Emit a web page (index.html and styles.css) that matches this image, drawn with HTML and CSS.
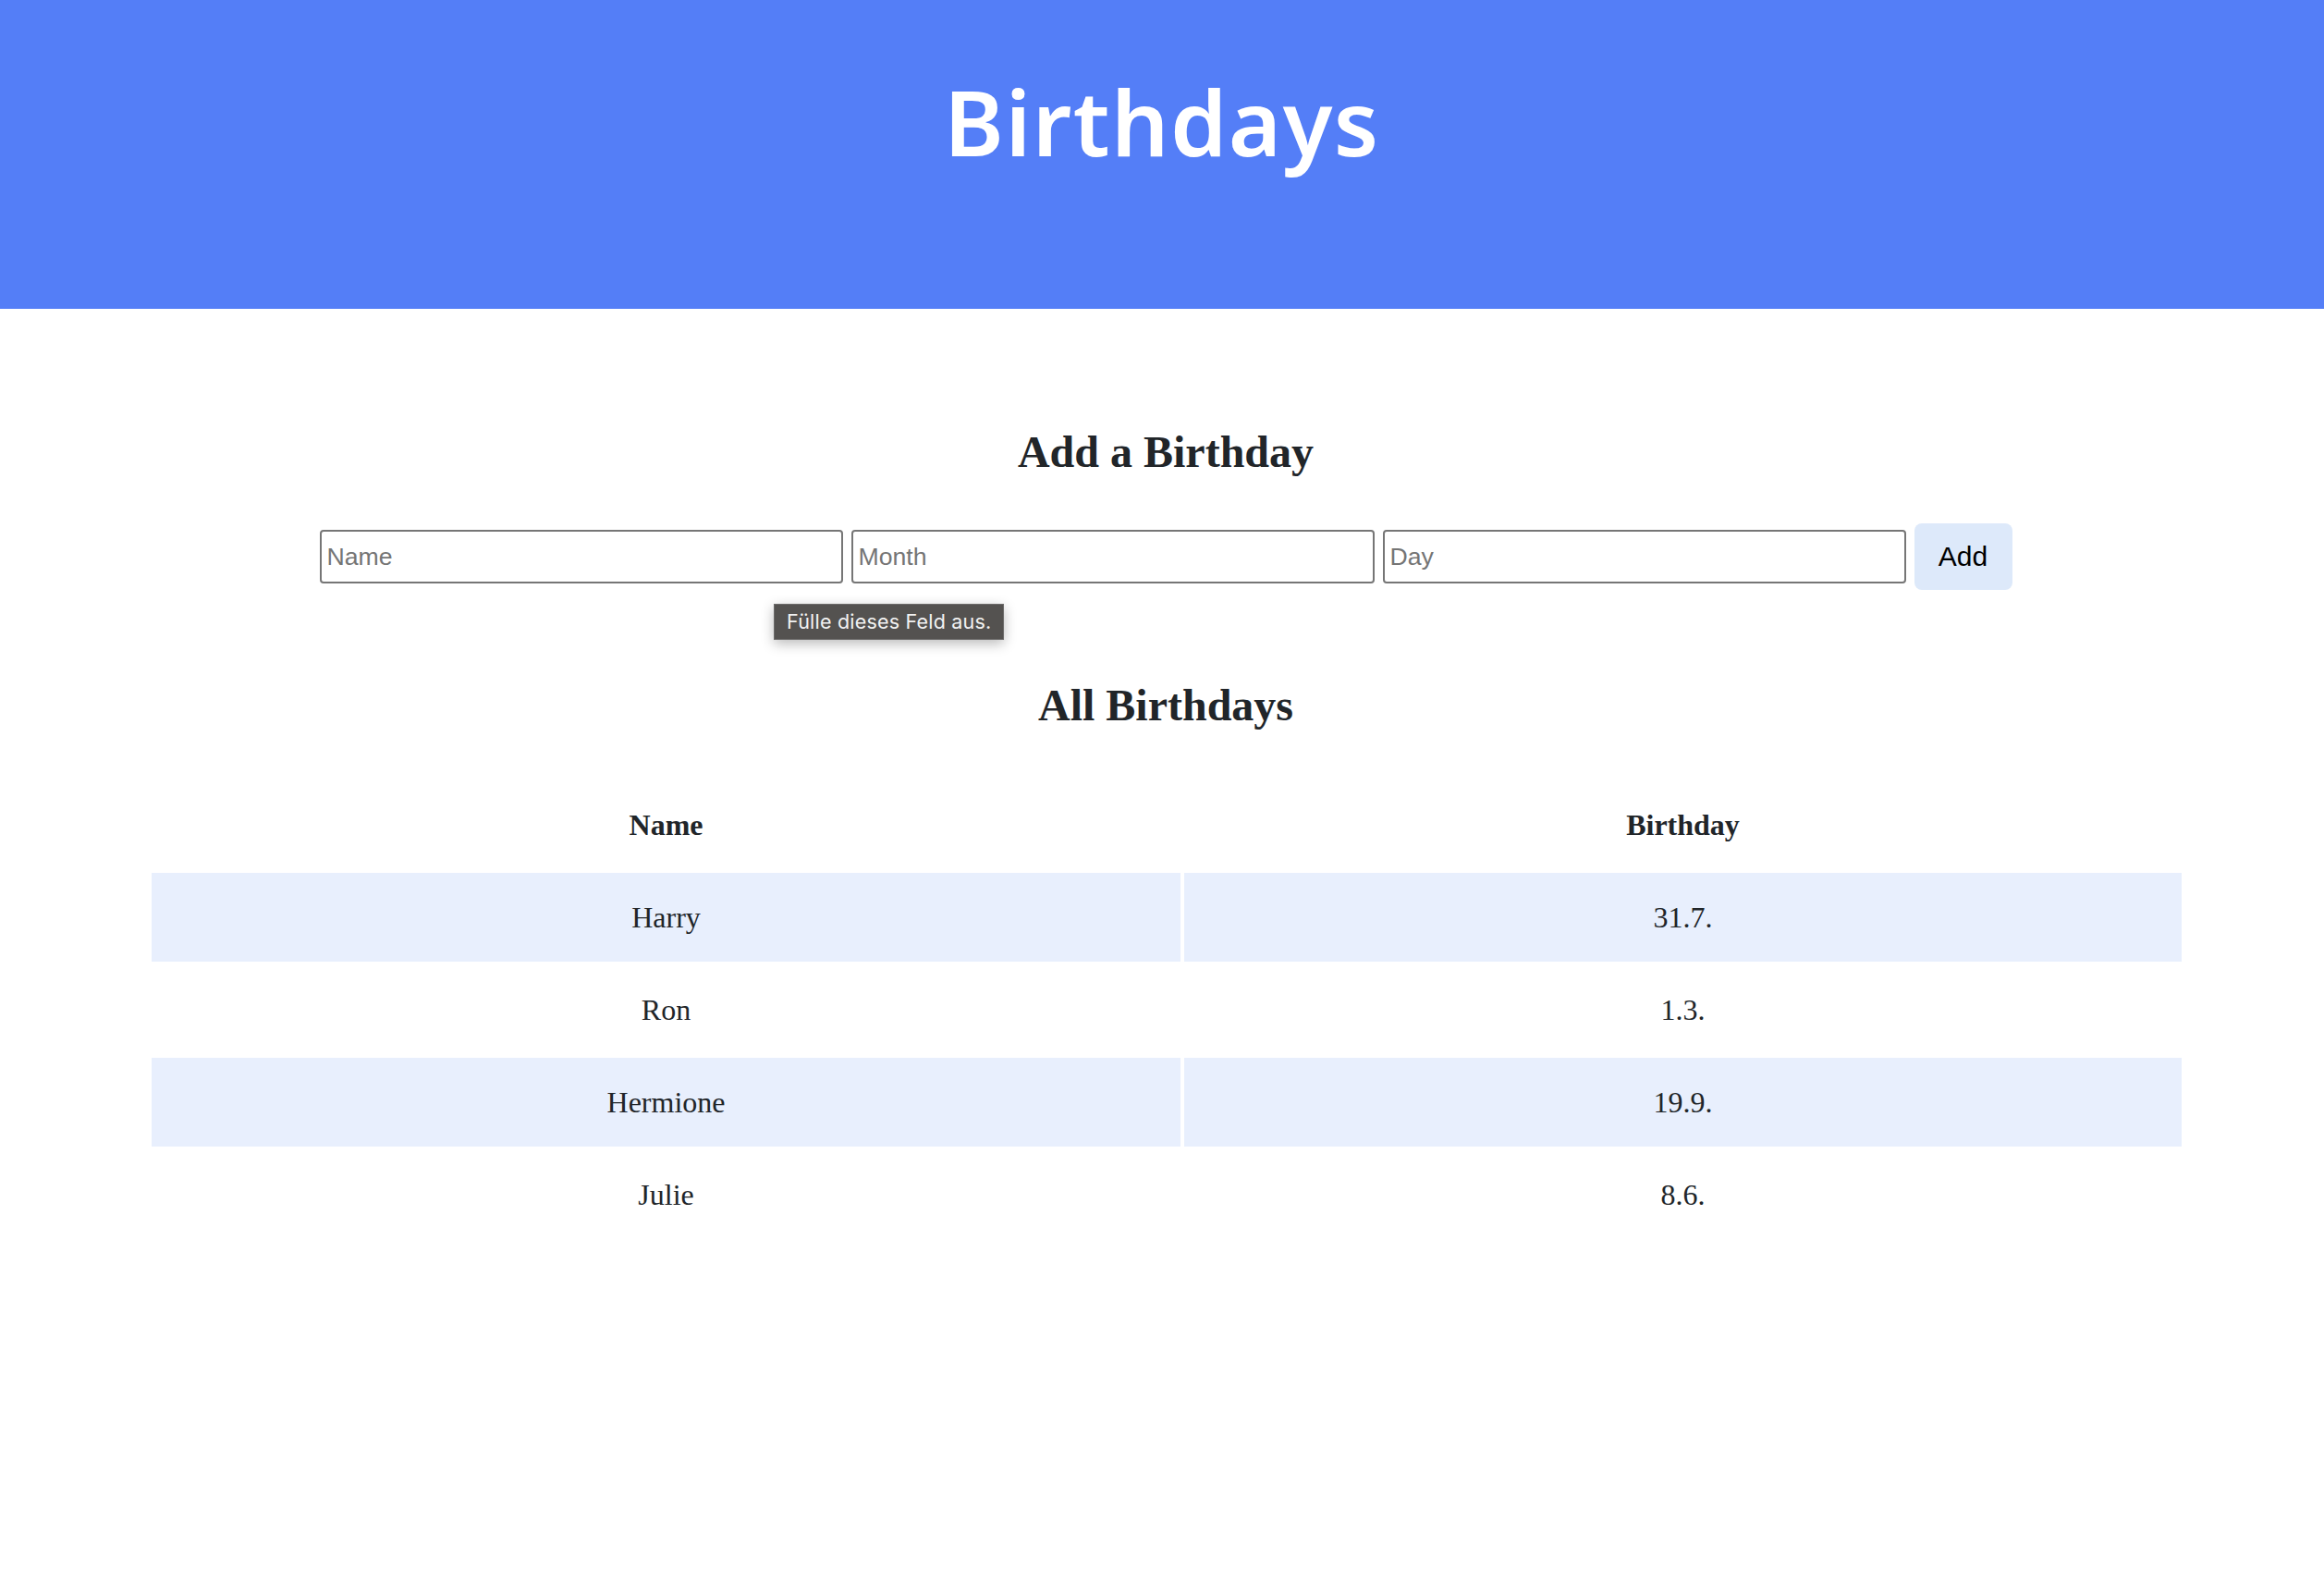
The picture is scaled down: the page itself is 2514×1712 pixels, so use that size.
FILE: index.html
```html
<!DOCTYPE html>
<html lang="en">
<head>
<meta charset="utf-8">
<title>Birthdays</title>
<link rel="stylesheet" href="styles.css">
</head>
<body>
<header class="site-header">
  <h1 class="site-title">Birthdays</h1>
</header>
<main class="content">
  <h2 class="section-title section-title--add">Add a Birthday</h2>
  <form class="add-form">
    <div class="field-wrap">
      <input class="field" type="text" placeholder="Name">
    </div>
    <input class="field" type="text" placeholder="Month">
    <input class="field" type="text" placeholder="Day">
    <button class="add-btn" type="button">Add</button>
    <div class="tooltip">Fülle dieses Feld aus.</div>
  </form>
  <h2 class="section-title section-title--all">All Birthdays</h2>
  <table class="bday-table">
    <colgroup>
      <col class="col-name">
      <col class="col-date">
    </colgroup>
    <thead>
      <tr><th>Name</th><th>Birthday</th></tr>
    </thead>
    <tbody>
      <tr><td>Harry</td><td>31.7.</td></tr>
      <tr><td>Ron</td><td>1.3.</td></tr>
      <tr><td>Hermione</td><td>19.9.</td></tr>
      <tr><td>Julie</td><td>8.6.</td></tr>
    </tbody>
  </table>
</main>
</body>
</html>
```

FILE: styles.css
```css
html, body {
  margin: 0;
  padding: 0;
  background: #ffffff;
}

body {
  font-family: "Liberation Serif", "Times New Roman", serif;
  color: #212529;
}

.site-header {
  box-sizing: border-box;
  height: 334px;
  padding-top: 82px;
  background: #547ef7;
  text-align: center;
}

.site-title {
  margin: 0;
  font-family: "Noto Sans", "DejaVu Sans", sans-serif;
  font-weight: 600;
  font-size: 98px;
  line-height: 98px;
  letter-spacing: 1.5px;
  color: #ffffff;
}

.content {
  padding-left: 8px;
}

.section-title {
  margin: 0;
  font-family: "Liberation Serif", "Times New Roman", serif;
  font-weight: bold;
  font-size: 48px;
  line-height: 55px;
  text-align: center;
  color: #212529;
}

.section-title--add {
  margin-top: 127px;
}

.section-title--all {
  margin-top: 97px;
}

.add-form {
  position: relative;
  margin-top: 50px;
  display: flex;
  justify-content: center;
  align-items: center;
  gap: 9px;
  height: 72px;
}

.field-wrap {
  display: flex;
}

.field {
  box-sizing: border-box;
  width: 566px;
  height: 58px;
  margin: 0;
  padding: 0 6px;
  border: 2px solid #767676;
  border-radius: 4px;
  background: #ffffff;
  font-family: "Liberation Sans", Arial, sans-serif;
  font-size: 26.67px;
  color: #000000;
  outline: none;
}

.field::placeholder {
  color: #757575;
}

.add-btn {
  box-sizing: border-box;
  width: 106px;
  height: 72px;
  margin: 0;
  padding: 0;
  border: none;
  border-radius: 8px;
  background: #dde9fa;
  font-family: "Liberation Sans", Arial, sans-serif;
  font-size: 30px;
  color: #000000;
}

.tooltip {
  position: absolute;
  left: 829px;
  top: 87px;
  box-sizing: border-box;
  height: 39px;
  padding: 0 13px;
  border: 1px solid #6c6b6a;
  background: #545250;
  color: #f2f2f2;
  font-family: Inter, "Liberation Sans", sans-serif;
  font-size: 21.5px;
  line-height: 37px;
  letter-spacing: 0.2px;
  white-space: nowrap;
  box-shadow: 0 4px 14px rgba(0, 0, 0, 0.28);
}

.bday-table {
  margin-top: 50px;
  margin-left: 152px;
  width: 2204px;
  table-layout: fixed;
  border-collapse: separate;
  border-spacing: 4px;
  font-family: "Liberation Serif", "Times New Roman", serif;
  font-size: 32px;
  color: #212529;
}

.col-name {
  width: 1113px;
}

.col-date {
  width: 1079px;
}

.bday-table th,
.bday-table td {
  height: 96px;
  padding: 0;
  text-align: center;
  vertical-align: middle;
}

.bday-table th {
  font-weight: bold;
}

.bday-table tbody tr:nth-child(odd) td {
  background: #e8effd;
}
```
